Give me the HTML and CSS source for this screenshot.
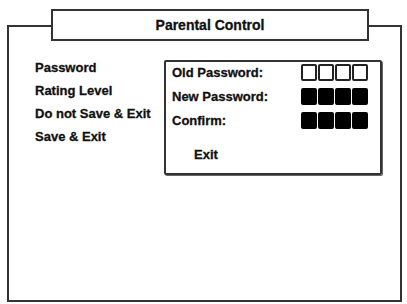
FILE: index.html
```html
<!DOCTYPE html>
<html lang="en">
<head>
    <meta charset="UTF-8">
    <title>Parental Control</title>
    <link rel="stylesheet" href="styles.css">
</head>
<body>

    <!-- Khung chính -->
    <div class="frame">
        <div class="title">Parental Control</div>

        <div class="content">
            <!-- Menu bên trái -->
            <ul class="menu">
                <li>Password</li>
                <li>Rating Level</li>
                <li>Do not Save &amp; Exit</li>
                <li>Save &amp; Exit</li>
            </ul>

            <!-- Hộp đổi mật khẩu -->
            <div class="pw-box">
                <div class="pw-row">
                    <span>Old Password:</span>
                    <div class="digits">
                        <i class="digit"></i><i class="digit"></i><i class="digit"></i><i class="digit"></i>
                    </div>
                </div>
                <div class="pw-row">
                    <span>New Password:</span>
                    <div class="digits">
                        <i class="digit filled"></i><i class="digit filled"></i><i class="digit filled"></i><i class="digit filled"></i>
                    </div>
                </div>
                <div class="pw-row">
                    <span>Confirm:</span>
                    <div class="digits">
                        <i class="digit filled"></i><i class="digit filled"></i><i class="digit filled"></i><i class="digit filled"></i>
                    </div>
                </div>
                <div class="pw-exit">Exit</div>
            </div>
        </div>
    </div>

</body>
</html>
```

FILE: styles.css
```css
body {
    margin: 0;
    padding: 0;
    background: #fff;
    font-family: "Liberation Sans", Arial, sans-serif;
    font-weight: bold;
    font-size: 13px;
    color: #111;
    -webkit-text-stroke: 0.3px #111;
}

.frame {
    box-sizing: border-box;
    width: 395px;
    height: 277px;
    margin: 25px 0 0 7px;
    border: 2px solid #333;
    box-shadow: 0 1px 0 #444;
}

/* Hộp tiêu đề đè lên viền trên */
.title {
    box-sizing: border-box;
    width: 318px;
    height: 32px;
    margin: -18px 0 0 42px;
    background: #fff;
    border: 2px solid #333;
    text-align: center;
    line-height: 28px;
    font-size: 14px;
}

.content {
    display: flex;
    margin-top: 19px;
}

.menu {
    list-style: none;
    margin: 0;
    padding: 0 0 0 26px;
    width: 129px;
}

.menu li {
    line-height: 23px;
}

.menu li:first-child {
    margin-top: -4px;
}

.pw-box {
    box-sizing: border-box;
    width: 218px;
    height: 115px;
    border: 2px solid #333;
    border-radius: 2px;
    padding: 2px 12px 0 6px;
    box-shadow: 1px 1px 0 #666;
}

.pw-row {
    display: flex;
    justify-content: space-between;
    align-items: center;
    height: 17px;
    margin-bottom: 7px;
}

.digits {
    display: flex;
    gap: 1px;
}

.digit {
    box-sizing: border-box;
    width: 16px;
    height: 17px;
    border: 2px solid #222;
    border-radius: 2px;
    background: #fff;
}

.digit.filled {
    background: #000;
    border-color: #000;
}

.pw-exit {
    margin: 18px 0 0 22px;
}
```
